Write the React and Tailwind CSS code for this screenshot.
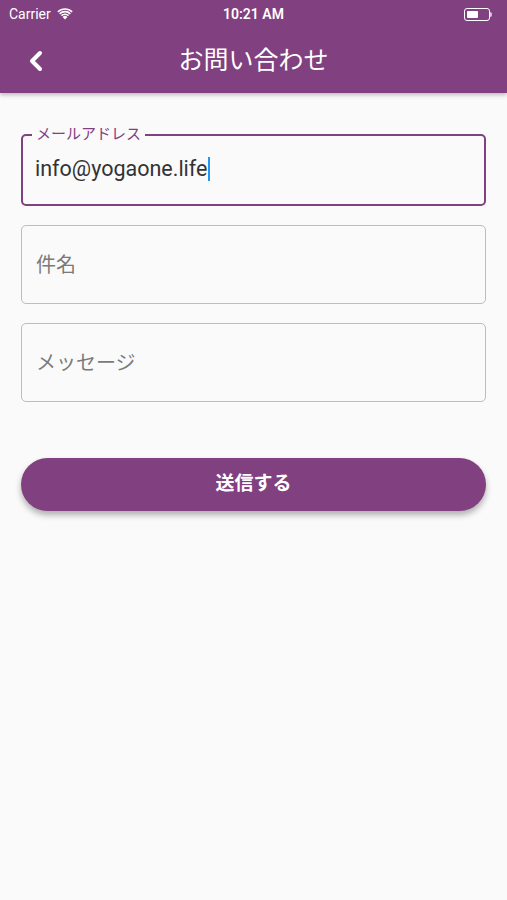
import { ChevronLeft } from 'lucide-react';

const font = { fontFamily: 'Roboto, "Noto Sans CJK JP", sans-serif' };

const StatusBar = () => (
  <div className="relative flex items-center justify-between h-[28px] px-[9px] text-white text-[14px]">
    <div className="flex items-center gap-[6px]">
      <span>Carrier</span>
      {/* wifi */}
      <svg width="16" height="12" viewBox="0 0 16 12" fill="white">
        <path d="M8 11.5 5.6 8.9a3.4 3.4 0 0 1 4.8 0Z" />
        <path d="M3.9 7.1a5.8 5.8 0 0 1 8.2 0l-1.1 1.2a4.2 4.2 0 0 0-6 0Z" />
        <path d="M2.1 5.2a8.4 8.4 0 0 1 11.8 0L12.8 6.4a6.8 6.8 0 0 0-9.6 0Z" />
        <path d="M0.3 3.3a11 11 0 0 1 15.4 0L14.6 4.5a9.4 9.4 0 0 0-13.2 0Z" />
      </svg>
    </div>
    <span className="absolute left-1/2 -translate-x-1/2 font-semibold">10:21 AM</span>
    {/* battery */}
    <div className="flex items-center mr-[6px]">
      <div className="w-[26px] h-[13px] rounded-[3px] border border-white p-[2px]">
        <div className="w-[11px] h-full bg-white rounded-[1px]" />
      </div>
      <div className="w-[2px] h-[5px] bg-white/70 rounded-r-sm" />
    </div>
  </div>
);

const Field = ({ placeholder }) => (
  <div className="h-[79px] rounded-[5px] border-[1.5px] border-[#bdbdbd] flex items-center px-[14px] text-[20px] text-[#7a7a7a]">
    {placeholder}
  </div>
);

export default function App() {
  return (
    <div className="min-h-[900px] bg-[#fafafa]" style={font}>
      <header className="bg-[#81407f] h-[93px] shadow-[0_2px_4px_rgba(0,0,0,0.25)]">
        <StatusBar />
        <div className="relative flex items-center justify-center h-[65px]">
          <ChevronLeft className="absolute left-[20px] w-[32px] h-[32px] text-white" strokeWidth={3} />
          <h1 className="text-white text-[25px]">お問い合わせ</h1>
        </div>
      </header>

      <main className="px-[21px] pt-[41px] flex flex-col">
        <div className="relative h-[72px] rounded-[5px] border-2 border-[#81407f] flex items-center px-[12px]">
          <span className="absolute -top-[12px] left-[9px] px-[4px] bg-[#fafafa] text-[#81407f] text-[15px] leading-[20px]">
            メールアドレス
          </span>
          <span className="text-[21.5px] text-[#333] -mt-[2px]">info@yogaone.life</span>
          <span className="w-[2px] h-[24px] bg-[#2196f3] ml-[1px] -mt-[2px]" />
        </div>

        <div className="mt-[19px] flex flex-col gap-[19px]">
          <Field placeholder="件名" />
          <Field placeholder="メッセージ" />
        </div>

        <button className="mt-[56px] h-[53px] rounded-full bg-[#81407f] text-white text-[19px] font-bold shadow-[0_4px_6px_rgba(0,0,0,0.3)]">
          送信する
        </button>
      </main>
    </div>
  );
}
